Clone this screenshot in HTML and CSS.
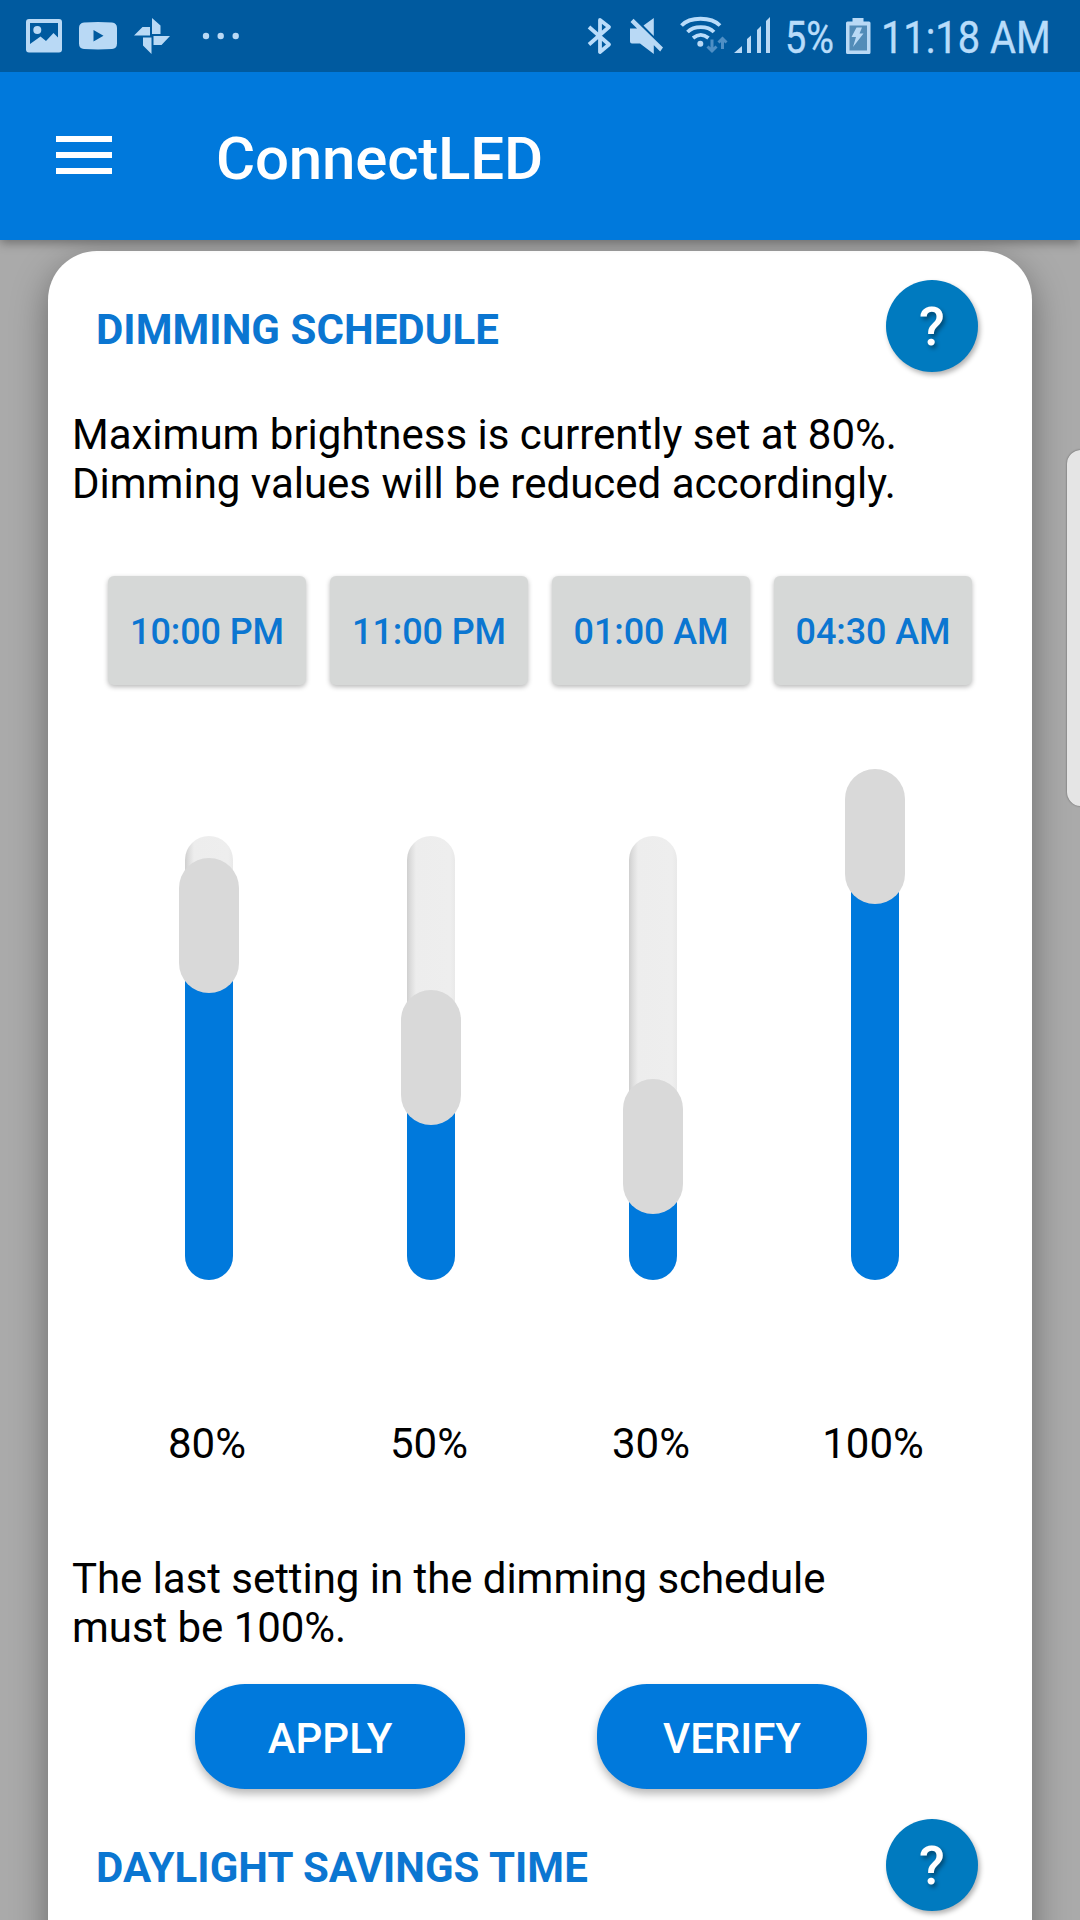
FILE: index.html
```html
<!DOCTYPE html>
<html lang="en">
<head>
<meta charset="utf-8">
<title>ConnectLED</title>
<link rel="stylesheet" href="styles.css">
</head>
<body>
<div class="screen">
  <div class="status">
    <div class="status-left">
      <svg width="36" height="72" viewBox="26 0 36 72"><path fill-rule="evenodd" d="M29 19H59Q62 19 62 22V49.500Q62 52.500 59 52.500H29Q26 52.500 26 49.500V22Q26 19 29 19ZM30 23V44L40.500 36.500L46 41L53.500 33L58 37.500V23Z"/><circle cx="37.300" cy="30" r="4"/></svg>
      <svg width="38" height="72" viewBox="79 0 38 72"><path fill-rule="evenodd" d="M84 22.500Q98 21.500 112 22.500Q117 23 117 28V43.500Q117 48.500 112 49Q98 49.800 84 49Q79 48.500 79 43.500V28Q79 23 84 22.500ZM93.500 30V41.500L103.500 35.800Z"/></svg>
      <svg width="36" height="72" viewBox="134 0 36 72"><path d="M152 18L160.500 25.500V34H152ZM170 36L161.500 45H153.500V36ZM151.500 54L143 45.500V37.500H151.500ZM134 35.500L142.500 27H150V35.500Z"/></svg>
      <svg class="more" width="38" height="72" viewBox="202 0 38 72"><circle cx="206" cy="36" r="3.200"/><circle cx="220.700" cy="36" r="3.200"/><circle cx="235.700" cy="36" r="3.200"/></svg>
    </div>
    <div class="status-right">
      <svg width="26" height="72" viewBox="586 0 26 72"><path class="line" d="M589 27L609 44.500L600 52V20L609 27L589 44.500" stroke-width="3.800"/></svg>
      <svg width="34" height="72" viewBox="630 0 34 72"><path d="M630 28.500H638L653.800 43.500V54L640 43.500H632Q630 43.500 630 41.500ZM643.500 25.500L653.800 18V36ZM633.500 18.800L663 47.500L660.200 51.500L630.500 22Z"/></svg>
      <svg width="50" height="72" viewBox="680 0 50 72"><path class="line" d="M681.500 25.500C690 16.500 711 16.500 720 25.500M687.500 32C694 25.500 707.500 25.500 714 32M693 38C698 34 703.500 34 708.500 38" stroke-width="3.800"/><circle cx="700.300" cy="43.800" r="3"/><path class="traffic" d="M712 39.500V51M707.500 46.500L712 51L716.500 46.500M722.500 49V38.500M718.500 42.500L722.500 38.500L726.500 42.500"/></svg>
      <svg width="37" height="72" viewBox="734 0 37 72"><path d="M734 53L742 46V53ZM747 39L751 35.500V53H747ZM757 30L761 26V53H757ZM766 21L770 17V53H766Z"/></svg>
      <span class="level">5%</span>
      <svg width="26" height="72" viewBox="845 0 26 72"><path d="M852.500 18H863.500V21.500H869Q870.500 21.500 870.500 23V52.500Q870.500 54 869 54H847.500Q846 54 846 52.500V23Q846 21.500 847.500 21.500H852.500Z"/><path fill="#528cb8" d="M849.500 25.500H867V50.500H849.500Z"/><path d="M856.500 27.500H862L859.500 33.500H863.500L853 47L856 37H851.500Z"/></svg>
      <span class="clock">11:18 AM</span>
    </div>
  </div>
  <header class="appbar">
    <div class="menu"><i></i><i></i><i></i></div>
    <h1>ConnectLED</h1>
  </header>
  <main class="card">
    <div class="heading"><h2>DIMMING SCHEDULE</h2><button class="help">?</button></div>
    <p class="intro">Maximum brightness is currently set at 80%.<br>Dimming values will be reduced accordingly.</p>
    <div class="columns times">
      <button>10:00 PM</button><button>11:00 PM</button><button>01:00 AM</button><button>04:30 AM</button>
    </div>
    <div class="columns sliders">
      <div class="slider"><div class="track"><div class="fill" style="height:350px"></div></div><div class="thumb" style="top:89px"></div></div>
      <div class="slider"><div class="track"><div class="fill" style="height:220px"></div></div><div class="thumb" style="top:221px"></div></div>
      <div class="slider"><div class="track"><div class="fill" style="height:130px"></div></div><div class="thumb" style="top:310px"></div></div>
      <div class="slider"><div class="track"><div class="fill" style="height:444px"></div></div><div class="thumb" style="top:0px"></div></div>
    </div>
    <div class="columns values"><span>80%</span><span>50%</span><span>30%</span><span>100%</span></div>
    <p class="note">The last setting in the dimming schedule<br>must be 100%.</p>
    <div class="actions"><button>APPLY</button><button>VERIFY</button></div>
    <div class="heading daylight"><h2>DAYLIGHT SAVINGS TIME</h2><button class="help">?</button></div>
  </main>
  <div class="edge-handle"></div>
</div>
</body>
</html>
```

FILE: styles.css
```css
* { box-sizing: border-box; }
body { margin: 0; font-family: Roboto, "Liberation Sans", sans-serif; color: #000; }
h1, h2, p { margin: 0; }
button { border: 0; padding: 0; font-family: inherit; }

.screen {
  position: relative;
  display: flex;
  flex-direction: column;
  width: 1080px;
  height: 1920px;
  overflow: hidden;
  background: #aaa;
}

/* Status bar */
.status {
  display: flex;
  justify-content: space-between;
  flex: none;
  height: 72px;
  padding: 0 29px 0 26px;
  background: #005a9f;
  color: #b8dcfa;
  position: relative;
  z-index: 3;
}
.status svg { flex: none; fill: #b9d9f5; }
.status .line { fill: none; stroke: #b9dcfa; stroke-linejoin: round; }
.status .traffic { fill: none; stroke: #4f8fc5; stroke-width: 3; }
.status-left { display: flex; gap: 17px; }
.more { margin-left: 15px; }
.status-right { display: flex; width: 465px; font-size: 45px; line-height: 75px; white-space: nowrap; }
.status-right svg:nth-child(2) { margin-left: 18px; }
.status-right svg:nth-child(3) { margin-left: 16px; }
.status-right svg:nth-child(4) { margin-left: 4px; }
.level { flex: none; width: 60px; margin-left: 14px; transform: scaleX(.84); transform-origin: left; -webkit-text-stroke: .4px #b8dcfa; }
.clock { margin-left: 10px; transform: scaleX(.884); transform-origin: left; -webkit-text-stroke: .4px #b8dcfa; }

/* App bar */
.appbar {
  position: relative;
  z-index: 2;
  display: flex;
  flex: none;
  height: 168px;
  padding: 64px 56px 0;
  background: #0079dc;
  box-shadow: 0 3px 10px rgba(0, 0, 0, .35);
}
.menu { display: flex; flex-direction: column; gap: 10px; width: 56px; }
.menu i { height: 6px; background: #fff; }
.appbar h1 { margin: -12px 0 0 104px; font-size: 60px; line-height: 70px; font-weight: 500; letter-spacing: -.2px; color: #fff; }

/* Card */
.card {
  flex: none;
  height: 1740px;
  margin: 11px 48px 0;
  padding-top: 29px;
  border-radius: 49px 49px 0 0;
  background: #fff;
  box-shadow: 0 12px 36px rgba(0, 0, 0, .38);
}
.heading { display: flex; justify-content: space-between; height: 92px; padding: 0 54px 0 48px; }
.heading h2 { padding-top: 25px; font-size: 42px; line-height: 49px; font-weight: 700; letter-spacing: .05px; color: #0b76d1; }
.help {
  width: 92px;
  height: 92px;
  border-radius: 50%;
  background: #007abf;
  color: #fff;
  font-size: 53px;
  font-weight: 500;
  line-height: 94px;
  text-shadow: 2px 3px 4px rgba(0, 0, 0, .4);
  box-shadow: 2px 3px 5px rgba(0, 0, 0, .3);
}
.card p { padding-left: 24px; font-size: 42px; line-height: 49px; }
.card .intro { margin-top: 38px; }
.card .note { margin-top: 86px; letter-spacing: -.05px; }
.columns { display: grid; grid-template-columns: repeat(4, 222px); margin-left: 48px; }
.times { margin-top: 68px; }
.times button {
  width: 198px;
  height: 109px;
  margin: 0 12px 1px;
  padding-top: 3px;
  border-radius: 6px;
  background: #d6d8d7;
  color: #0b76d1;
  font-size: 36px;
  font-weight: 500;
  letter-spacing: -.1px;
  box-shadow: 0 2px 5px rgba(0, 0, 0, .28);
}

/* Vertical sliders */
.sliders { margin-top: 83px; padding-left: 2px; }
.slider { position: relative; display: flex; align-items: flex-end; justify-content: center; height: 511px; }
.track {
  display: flex;
  align-items: flex-end;
  width: 48px;
  height: 444px;
  border-radius: 24px;
  overflow: hidden;
  background: linear-gradient(90deg, #cfcfcf, #dedede 4px, #ededed 9px, #eee 43px, #e9e9e9);
}
.fill { width: 48px; background: #0079dc; }
.thumb { position: absolute; left: 81px; width: 60px; height: 135px; border-radius: 30px; background: #d9d9d9; }
.values { margin-top: 139px; text-align: center; font-size: 42px; line-height: 49px; }

.actions { display: flex; gap: 132px; margin: 32px 0 0 147px; }
.actions button {
  width: 270px;
  height: 105px;
  padding-top: 4px;
  border-radius: 50px;
  background: #0079dc;
  color: #fff;
  font-size: 42px;
  font-weight: 500;
  box-shadow: 0 5px 8px rgba(0, 0, 0, .28);
}
.daylight { margin-top: 30px; }
.daylight h2 { padding-top: 24px; }

/* System edge-panel handle floating over the page */
.edge-handle {
  position: absolute;
  top: 450px;
  right: -4px;
  width: 17px;
  height: 356px;
  border-radius: 14px 0 0 14px;
  background: #e5e5e5;
  box-shadow: 0 0 2px rgba(0, 0, 0, .5);
}
```
